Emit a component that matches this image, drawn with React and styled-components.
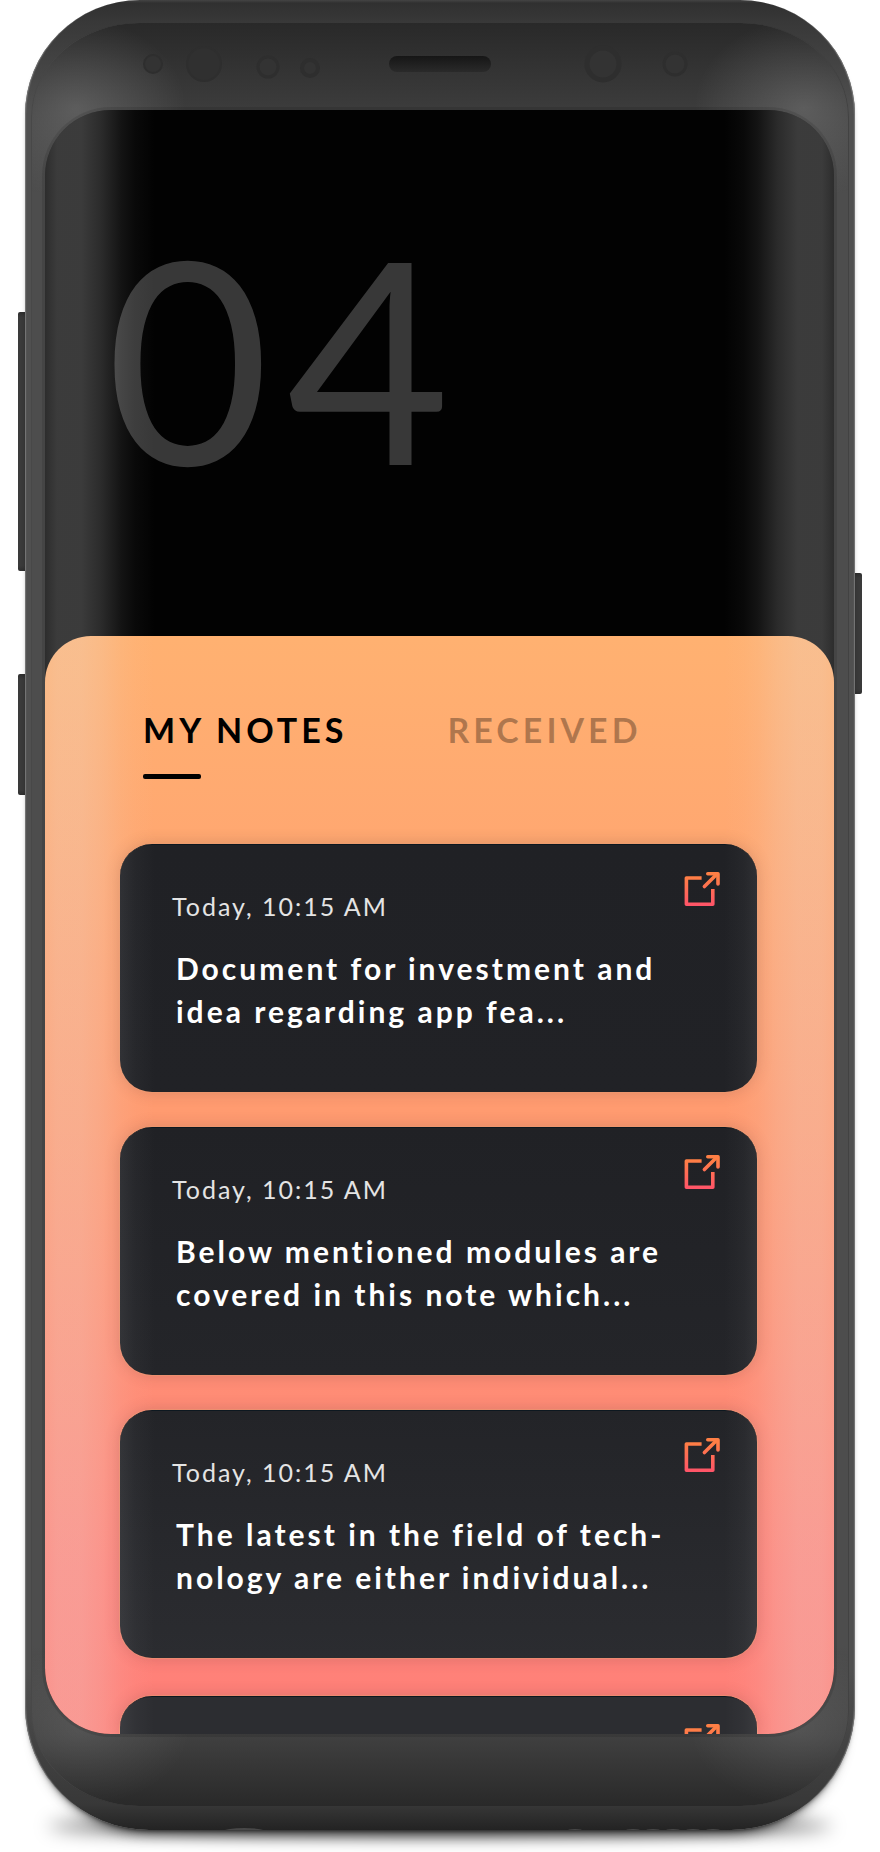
import React, { useId, useState } from "react";
import styled, { createGlobalStyle, css } from "styled-components";

const GlobalStyle = createGlobalStyle`
  *, *::before, *::after { box-sizing: border-box; }
  body {
    margin: 0;
    background: #fff;
    font-family: Lato, "Open Sans", "Liberation Sans", sans-serif;
  }
`;

const Page = styled.main`
  display: flow-root;
  padding: 0 18px 22px;
  overflow: hidden;
`;

const Device = styled.div`
  display: grid;
  grid-template-columns: 7px minmax(0, 1fr) 7px;
`;

const Rail = styled.div`
  display: flex;
  flex-direction: column;
  gap: 103px;
  padding-top: ${({ $top }) => $top}px;
`;

const SideKey = styled.span`
  height: ${({ $length }) => $length}px;
  background: linear-gradient(#2e2e2e, #3a3a3a 5px, #3a3a3a calc(100% - 5px), #2e2e2e);
  border-radius: ${({ $side }) => ($side === "left" ? "2px 0 0 2px" : "0 2px 2px 0")};
`;

const Rim = styled.div`
  position: relative;
  padding: 23px 6px 24px;
  border-radius: 115px 115px 124px 124px;
  background: linear-gradient(
    #444 0,
    #303030 3px,
    #383838 22px,
    #505050 110px,
    #505050 calc(100% - 160px),
    #383838 calc(100% - 26px),
    #232323 100%
  );
  box-shadow:
    inset 2px 0 1px -1px #777,
    inset -2px 0 1px -1px #777,
    0 14px 14px -12px rgba(0, 0, 0, 0.75),
    0 3px 5px -3px rgba(0, 0, 0, 0.7);

  &::before {
    content: "";
    position: absolute;
    z-index: -1;
    left: 24px;
    right: 24px;
    bottom: -5px;
    height: 18px;
    border-radius: 50%;
    background: rgba(0, 0, 0, 0.7);
    filter: blur(9px);
  }
`;

const Glass = styled.div`
  padding: 0 15px 72px 14px;
  border-radius: 108px / 94px;
  background:
    radial-gradient(110px 90px at 45px 85px, rgba(255, 255, 255, 0.17), transparent),
    radial-gradient(110px 90px at calc(100% - 45px) 85px, rgba(255, 255, 255, 0.17), transparent),
    radial-gradient(110px 80px at 50px calc(100% - 80px), rgba(255, 255, 255, 0.1), transparent),
    radial-gradient(110px 80px at calc(100% - 50px) calc(100% - 80px), rgba(255, 255, 255, 0.1), transparent),
    linear-gradient(
      #292929 0,
      #3c3c3c 86px,
      #4d4d4d 170px,
      #4d4d4d calc(100% - 160px),
      #404040 calc(100% - 70px),
      #292929 100%
    );
  box-shadow: inset 1px 0 0 #484848, inset -1px 0 0 #424242;
`;

const TopBezel = styled.div`
  display: flex;
  justify-content: center;
  height: 87px;
  padding-top: 21px;

  svg {
    width: 600px;
    max-width: 100%;
    height: 40px;
  }
`;

const Screen = styled.div`
  position: relative;
  overflow: hidden;
  border-radius: 66px;
  background: #020202;
  box-shadow: 0 0 0 3px rgba(0, 0, 0, 0.1);

  &::after {
    content: "";
    position: absolute;
    inset: 0;
    pointer-events: none;
    background:
      linear-gradient(
        90deg,
        rgba(230, 230, 230, 0.19) 0,
        rgba(230, 230, 230, 0.25) 12px,
        rgba(230, 230, 230, 0.25) 36px,
        rgba(230, 230, 230, 0.18) 56px,
        rgba(230, 230, 230, 0.08) 76px,
        rgba(230, 230, 230, 0.03) 90px,
        transparent 110px
      ),
      linear-gradient(
        270deg,
        rgba(230, 230, 230, 0.19) 0,
        rgba(230, 230, 230, 0.25) 12px,
        rgba(230, 230, 230, 0.25) 36px,
        rgba(230, 230, 230, 0.18) 56px,
        rgba(230, 230, 230, 0.08) 76px,
        rgba(230, 230, 230, 0.03) 90px,
        transparent 110px
      );
  }
`;

const DayHeader = styled.header`
  height: 526px;
  padding: 104px 0 0 61px;
`;

const DayNumber = styled.h1`
  margin: 0;
  color: #383838;
  font-size: 282px;
  font-weight: 400;
  line-height: 284px;
  letter-spacing: 17px;
`;

const NotesPanel = styled.section`
  padding: 50px 77px 0 75px;
  border-radius: 46px 46px 0 0;
  background: linear-gradient(#ffb171, #ff9a70 45%, #ff8379 85%, #ff8078);
`;

const TabList = styled.div`
  display: flex;
  gap: 100px;
  padding-left: 23px;
`;

const Tab = styled.button`
  display: flex;
  flex-direction: column;
  padding: 0;
  border: 0;
  background: none;
  color: ${({ $active }) => ($active ? "#000" : "rgba(0, 0, 0, 0.31)")};
  font: 700 34px/88px Lato, sans-serif;
  letter-spacing: 4px;
  cursor: pointer;

  &::after {
    content: "";
    width: 58px;
    height: 5px;
    border-radius: 2px;
    background: ${({ $active }) => ($active ? "#000" : "transparent")};
  }
`;

const NoteList = styled.ul`
  display: grid;
  gap: 35px;
  margin: 65px 0 0;
  padding: 0;
  list-style: none;
`;

const cardSurface = css`
  background: linear-gradient(${({ $from }) => $from}, ${({ $to }) => $to});
  border-top: 1px solid #0d1820;
  box-shadow: 0 0 16px rgba(60, 40, 50, 0.2), 0 0 0 1px rgba(255, 170, 120, 0.5);
`;

const NoteCard = styled.li`
  ${cardSurface}
  display: flex;
  justify-content: space-between;
  align-items: flex-start;
  min-height: 248px;
  padding: 26px 37px 26px 52px;
  border-radius: 32px;
`;

const NextNote = styled.div`
  ${cardSurface}
  display: flex;
  justify-content: flex-end;
  height: 38px;
  margin-top: 38px;
  padding: 26px 37px 0 52px;
  border-radius: 32px 32px 0 0;
  overflow: hidden;
`;

const NoteBody = styled.article`
  padding-top: 19px;
`;

const NoteTime = styled.time`
  display: block;
  color: #e4e4e4;
  font-size: 25px;
  line-height: 32px;
  letter-spacing: 2px;
`;

const NoteTitle = styled.h2`
  margin: 25px 0 0 4px;
  color: #fff;
  font-size: 30px;
  font-weight: 700;
  line-height: 43px;
  letter-spacing: 3px;
  white-space: pre-line;
`;

const OpenButton = styled.button`
  display: block;
  flex: none;
  width: 36px;
  height: 36px;
  padding: 0;
  border: 0;
  background: none;
  cursor: pointer;

  svg { display: block; }
`;

const Ports = styled.svg`
  position: absolute;
  left: 200px;
  bottom: 0;
  width: 500px;
  height: 3px;
`;

function OpenIcon() {
  const id = useId();
  return (
    <svg width="36" height="36" viewBox="0 0 36 36" fill="none" aria-hidden="true">
      <defs>
        <linearGradient id={id} gradientUnits="userSpaceOnUse" x1="0" y1="6" x2="0" y2="34">
          <stop offset="0" stopColor="#ff7f45" />
          <stop offset="1" stopColor="#ff5568" />
        </linearGradient>
      </defs>
      <g stroke={`url(#${id})`} strokeWidth="3.6" strokeLinejoin="round">
        <path d="M17.6 7H2.4V33.2H28.8V18" />
        <path d="M20.4 15.6L33 3" strokeLinecap="round" />
        <path d="M23.8 2.8H34V13" strokeLinecap="round" />
      </g>
    </svg>
  );
}

function Sensors() {
  return (
    <svg viewBox="0 0 600 40" aria-hidden="true">
      <defs>
        <linearGradient id="speaker" x1="0" y1="0" x2="0" y2="1">
          <stop offset="0" stopColor="#161616" />
          <stop offset="1" stopColor="#2a2a2a" />
        </linearGradient>
      </defs>
      <g fill="#333" stroke="#2e2e2e" strokeWidth="2">
        <circle cx="13" cy="20" r="9" />
        <circle cx="64" cy="20" r="17" fill="#303030" />
        <circle cx="128" cy="23" r="10" strokeWidth="3" />
        <circle cx="170" cy="24" r="8" strokeWidth="4" />
        <circle cx="463" cy="20" r="16" strokeWidth="5" />
        <circle cx="535" cy="20" r="11" strokeWidth="3" />
      </g>
      <rect x="249" y="12" width="102" height="16" rx="8" fill="url(#speaker)" />
    </svg>
  );
}

const NOTES = [
  { title: "Document for investment and\nidea regarding app fea...", from: "#202125", to: "#212226" },
  { title: "Below mentioned modules are\ncovered in this note which...", from: "#202125", to: "#242529" },
  { title: "The latest in the field of tech-\nnology are either individual...", from: "#232428", to: "#2b2c30" },
];

const TABS = ["MY NOTES", "RECEIVED"];

export default function App() {
  const [active, setActive] = useState(TABS[0]);
  return (
    <Page>
      <GlobalStyle />
      <Device>
        <Rail $top={312}>
          <SideKey $side="left" $length={259} />
          <SideKey $side="left" $length={121} />
        </Rail>
        <Rim>
          <Glass>
            <TopBezel>
              <Sensors />
            </TopBezel>
            <Screen>
              <DayHeader>
                <DayNumber>04</DayNumber>
              </DayHeader>
              <NotesPanel>
                <TabList role="tablist">
                  {TABS.map((name) => (
                    <Tab
                      key={name}
                      type="button"
                      role="tab"
                      aria-selected={active === name}
                      $active={active === name}
                      onClick={() => setActive(name)}
                    >
                      {name}
                    </Tab>
                  ))}
                </TabList>
                <NoteList>
                  {NOTES.map((note) => (
                    <NoteCard key={note.title} $from={note.from} $to={note.to}>
                      <NoteBody>
                        <NoteTime>Today, 10:15 AM</NoteTime>
                        <NoteTitle>{note.title}</NoteTitle>
                      </NoteBody>
                      <OpenButton type="button" aria-label="Open note">
                        <OpenIcon />
                      </OpenButton>
                    </NoteCard>
                  ))}
                </NoteList>
                <NextNote $from="#2c2d31" $to="#2c2d31">
                  <OpenButton type="button" aria-label="Open next note">
                    <OpenIcon />
                  </OpenButton>
                </NextNote>
              </NotesPanel>
            </Screen>
          </Glass>
          <Ports viewBox="0 0 500 3" aria-hidden="true">
            <g fill="#484848">
              <ellipse cx="19" cy="4" rx="20" ry="3" />
              <ellipse cx="350" cy="4" rx="8" ry="2" />
              <ellipse cx="408" cy="4" rx="8" ry="2" />
              <ellipse cx="428" cy="4" rx="8" ry="2" />
              <ellipse cx="448" cy="4" rx="8" ry="2" />
              <ellipse cx="468" cy="4" rx="8" ry="2" />
              <ellipse cx="488" cy="4" rx="8" ry="2" />
            </g>
          </Ports>
        </Rim>
        <Rail $top={573}>
          <SideKey $side="right" $length={121} />
        </Rail>
      </Device>
    </Page>
  );
}
